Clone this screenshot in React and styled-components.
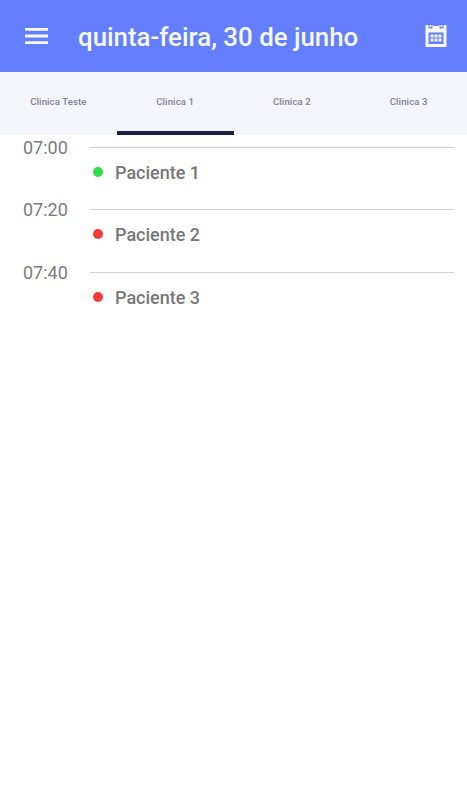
import React from "react";
import styled, { createGlobalStyle } from "styled-components";

const GlobalStyle = createGlobalStyle`
  body {
    margin: 0;
    background: #fff;
    font-family: Roboto, sans-serif;
  }
`;

const Container = styled.main`
  display: flex;
  flex-direction: column;
  min-height: 100vh;
`;

const Header = styled.header`
  display: flex;
  align-items: center;
  height: 72px;
  padding: 0 20px 0 24px;
  box-sizing: border-box;
  background: #637fff;
  color: #f6faff;
`;

const IconButton = styled.button`
  display: flex;
  padding: 0;
  border: 0;
  background: none;
  color: inherit;
`;

const Title = styled.h1`
  flex: 1;
  margin: 0 0 0 29px;
  padding-top: 2px;
  font-size: 25.85px;
  font-weight: 500;
  line-height: 30px;
  white-space: nowrap;
`;

const Tabs = styled.nav`
  display: flex;
  height: 63px;
  background: #f4f4fb;
`;

const Tab = styled.a`
  display: flex;
  flex: 1;
  align-items: center;
  justify-content: center;
  box-sizing: border-box;
  border-bottom: 4px solid ${(props) => (props.$active ? "#1d2140" : "transparent")};
  color: #828296;
  font-size: 9.6px;
  font-weight: 500;
  line-height: 11px;
  letter-spacing: 0.1px;
`;

const Agenda = styled.section`
  display: flex;
  flex-direction: column;
`;

const Slot = styled.div`
  display: flex;
  height: 62.3px;
  padding: 0 13px 0 23px;
`;

const Time = styled.span`
  width: 67px;
  padding-top: 2px;
  color: #7c7c7c;
  font-size: 18px;
  line-height: 21px;
`;

const Entry = styled.div`
  flex: 1;
  height: 50px;
  margin-top: 12px;
  border-top: 1px solid #d0d0d0;
`;

const Patient = styled.div`
  display: flex;
  align-items: center;
  gap: 12px;
  padding: 14px 0 0 3px;
  color: #777;
  font-size: 18px;
  font-weight: 500;
  line-height: 22px;
`;

const Status = styled.span`
  width: 10px;
  height: 10px;
  margin-top: -2px;
  border-radius: 50%;
  background: ${(props) => props.$color};
`;

const tabs = ["Clinica Teste", "Clinica 1", "Clinica 2", "Clinica 3"];

const slots = [
  { time: "07:00", patient: "Paciente 1", color: "#2edb4f" },
  { time: "07:20", patient: "Paciente 2", color: "#f43b38" },
  { time: "07:40", patient: "Paciente 3", color: "#f43b38" },
];

const MenuIcon = () => (
  <svg width="25" height="18" viewBox="0 0 25 18" fill="currentColor">
    <path d="M1 1h23v2.8H1zM1 7.6h23v2.8H1zM1 14.2h23V17H1z" />
  </svg>
);

const CalendarIcon = () => (
  <svg width="22" height="22" viewBox="0 0 22 22" fill="currentColor">
    <path
      fillRule="evenodd"
      d="M.5 0H3.500v3.500h4V0H8.500v1h5V0h1v3.500h4V0H21.500v22H.500zM3.500 7.500v11.500h15V7.500z"
    />
    <path d="M4.700 0h1.700v2.300H4.700zM15.600 0h1.700v2.300h-1.700z" />
    <path d="M5.500 9.500h3v3h-3zM9.500 9.500h3v3h-3zM13.500 9.500h3v3h-3zM5.500 13.500h3v3h-3zM9.500 13.500h3v3h-3zM13.500 13.500h3v3h-3z" />
  </svg>
);

const App = () => {
  return (
    <Container>
      <GlobalStyle />
      <Header>
        <IconButton aria-label="Menu">
          <MenuIcon />
        </IconButton>
        <Title>quinta-feira, 30 de junho</Title>
        <IconButton aria-label="Calendário">
          <CalendarIcon />
        </IconButton>
      </Header>
      <Tabs>
        {tabs.map((tab) => (
          <Tab key={tab} $active={tab === "Clinica 1"}>
            {tab}
          </Tab>
        ))}
      </Tabs>
      <Agenda>
        {slots.map((slot) => (
          <Slot key={slot.time}>
            <Time>{slot.time}</Time>
            <Entry>
              <Patient>
                <Status $color={slot.color} />
                {slot.patient}
              </Patient>
            </Entry>
          </Slot>
        ))}
      </Agenda>
    </Container>
  );
};

export default App;
